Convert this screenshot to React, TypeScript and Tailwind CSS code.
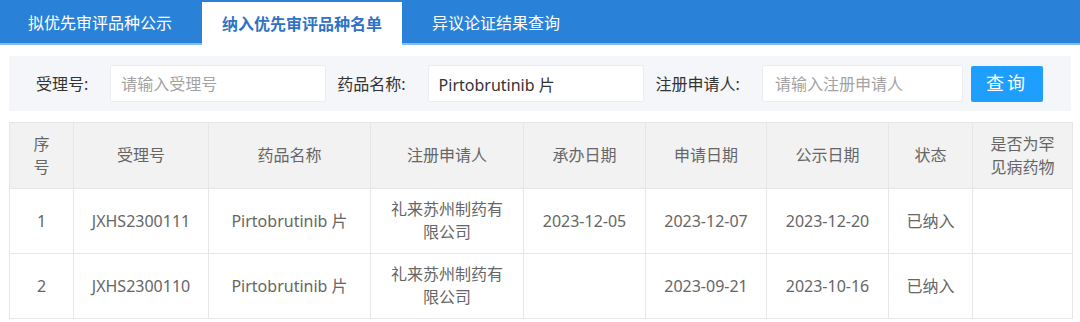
const font = { fontFamily: '"Noto Sans", "Noto Sans CJK SC", sans-serif' };

const tabs = ["拟优先审评品种公示", "纳入优先审评品种名单", "异议论证结果查询"];

const cols = [64, 135, 162, 153, 122, 121, 122, 84, 100];
const heads = ["序号", "受理号", "药品名称", "注册申请人", "承办日期", "申请日期", "公示日期", "状态", "是否为罕见病药物"];

const rows = [
  ["1", "JXHS2300111", "Pirtobrutinib 片", "礼来苏州制药有限公司", "2023-12-05", "2023-12-07", "2023-12-20", "已纳入", ""],
  ["2", "JXHS2300110", "Pirtobrutinib 片", "礼来苏州制药有限公司", "", "2023-09-21", "2023-10-16", "已纳入", ""],
];

export default function App() {
  return (
    <div className="w-[1080px] h-[322px] bg-white overflow-hidden" style={font}>
      {/* tab bar */}
      <div className="h-[45px] bg-[#2a82d8] border-b-2 border-[#86bcee] flex items-end pl-2 gap-[10px]">
        {tabs.map((t, i) =>
          i === 1 ? (
            <div
              key={t}
              className="h-[43px] -mb-[2px] px-5 bg-white flex items-center text-[16px] font-bold text-[#2f72c4]"
            >
              {t}
            </div>
          ) : (
            <div key={t} className="h-[41px] px-5 flex items-center text-[16px] text-white">
              {t}
            </div>
          )
        )}
      </div>

      {/* search */}
      <div className="mx-[9px] mt-[11px] h-[55px] bg-[#f4f6f9] flex items-center pl-[27px] text-[16px] text-[#333]">
        <span>受理号:</span>
        <input
          className="ml-[22px] w-[216px] h-[37px] bg-white border border-[#ebedf0] rounded-[2px] px-[10px] outline-none placeholder:text-[#a3a3a3]"
          placeholder="请输入受理号"
        />
        <span className="ml-[11px]">药品名称:</span>
        <input
          className="ml-[22px] w-[216px] h-[37px] bg-white border border-[#ebedf0] rounded-[2px] px-[10px] outline-none text-[#333]"
          defaultValue="Pirtobrutinib 片"
          readOnly
        />
        <span className="ml-[12px]">注册申请人:</span>
        <input
          className="ml-[22px] w-[201px] h-[37px] bg-white border border-[#ebedf0] rounded-[2px] px-[12px] outline-none placeholder:text-[#a3a3a3]"
          placeholder="请输入注册申请人"
        />
        <button className="ml-[8px] w-[72px] h-[36px] bg-[#1e9fff] rounded-[2px] text-white text-[18px] tracking-[3px]">
          查询
        </button>
      </div>

      {/* table */}
      <table className="ml-[9px] mt-[11px] w-[1063px] table-fixed border-collapse text-[16px] leading-[23px] text-[#666]">
        <colgroup>
          {cols.map((w, i) => (
            <col key={i} style={{ width: w }} />
          ))}
        </colgroup>
        <thead>
          <tr className="h-[66px] bg-[#f2f2f2]">
            {heads.map((h) => (
              <th key={h} className="border border-[#e6e6e6] px-[17px] font-normal text-center">
                {h}
              </th>
            ))}
          </tr>
        </thead>
        <tbody>
          {rows.map((r) => (
            <tr key={r[0]} className="h-[65px]">
              {r.map((c, i) => (
                <td key={i} className="border border-[#e6e6e6] px-[17px] text-center">
                  {c}
                </td>
              ))}
            </tr>
          ))}
        </tbody>
      </table>
    </div>
  );
}
